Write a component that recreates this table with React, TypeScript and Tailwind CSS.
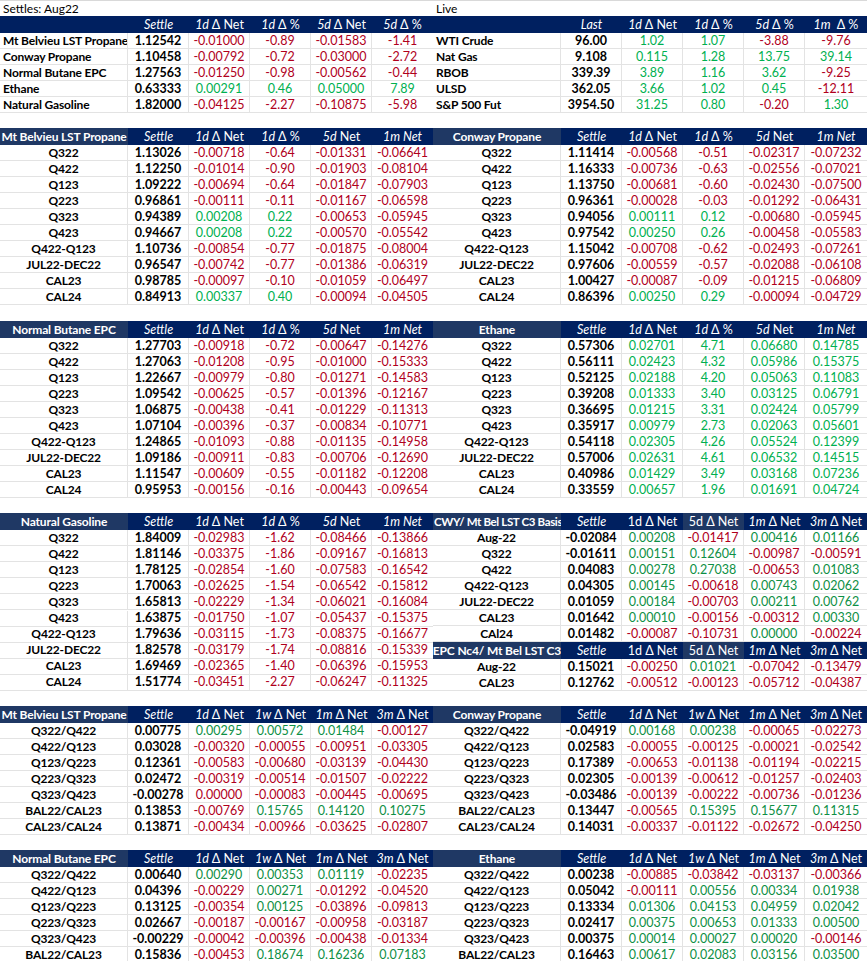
import React from "react";

type Head = [string, string?]; // [italic part, upright part]
type Row = string[];

const RED = "text-[#b0001c]";
const GREEN = "text-[#00b050]";
const GREEN_DK = "text-[#0e8f45]";

const NAVY = "bg-[#002060]";
const NAVY_LT = "bg-[#1f3864]";

const productHeads: Head[] = [["Settle"], ["1d", " Δ Net"], ["1d", " Δ %"], ["5d", " Net"], ["1m Net"]];
const spreadHeads: Head[] = [["Settle"], ["1d", " Δ Net"], ["1w", " Δ Net"], ["1m", " Δ Net"], ["3m", " Δ Net"]];
const basisHeads: Head[] = [["Settle"], ["", "1d Δ Net"], ["", "5d Δ Net"], ["1m", " Δ Net"], ["3m", " Δ Net"]];

function tone(v: string, dark: boolean) {
  if (v.startsWith("!")) return RED;
  if (v.startsWith("-")) return RED;
  return dark ? GREEN_DK : GREEN;
}

function HeadCell({ h, bg }: { h: Head; bg: string }) {
  return (
    <div className={`${bg} h-[17px] flex items-center justify-center whitespace-nowrap text-[12.5px] text-white`}>
      {h[0] && <span className="italic">{h[0]}</span>}
      {h[1] && <span className="whitespace-pre">{h[1]}</span>}
    </div>
  );
}

function Table({
  side,
  title,
  heads,
  rows,
  dark = false,
  leftLabels = false,
  lightCols = [],
  titleLeft = false,
}: {
  side: "l" | "r";
  title?: string;
  heads: Head[];
  rows: Row[];
  dark?: boolean;
  leftLabels?: boolean;
  lightCols?: number[];
  titleLeft?: boolean;
}) {
  const cols =
    side === "l"
      ? "w-[433px] grid-cols-[128px_repeat(5,61px)]"
      : "w-[434px] grid-cols-[128px_repeat(4,61px)_62px]";
  return (
    <div className={`grid ${cols}`}>
      <div
        className={`${title ? NAVY_LT : NAVY} h-[17px] flex items-center ${
          titleLeft ? "justify-start pl-[1px] text-[11.5px] tracking-[-0.35px]" : "justify-center text-[12px] tracking-[-0.15px]"
        } overflow-hidden whitespace-nowrap font-bold text-white`}
      >
        {title}
      </div>
      {heads.map((h, i) => (
        <HeadCell key={i} h={h} bg={lightCols.includes(i + 1) ? NAVY_LT : NAVY} />
      ))}
      {rows.map((r, ri) => (
        <React.Fragment key={ri}>
          <div
            className={`h-4 flex items-center ${
              leftLabels ? "justify-start pl-[3px]" : "justify-center"
            } whitespace-nowrap overflow-hidden border-r border-b border-[#e3e3e3] text-[12px] tracking-[-0.15px] font-bold text-black`}
          >
            {r[0]}
          </div>
          <div className="h-4 flex items-center justify-center border-r border-b border-[#e3e3e3] font-bold text-black">
            {r[1]}
          </div>
          {r.slice(2).map((v, vi) => (
            <div
              key={vi}
              className={`h-4 flex items-center justify-center border-b border-[#e3e3e3] ${
                vi < r.length - 3 ? "border-r" : ""
              } ${tone(v, dark)}`}
            >
              {v.replace("!", "")}
            </div>
          ))}
        </React.Fragment>
      ))}
    </div>
  );
}

function Pair({ children }: { children: React.ReactNode }) {
  return <div className="flex">{children}</div>;
}

export default function App() {
  return (
    <div className="w-[867px] h-[961px] overflow-hidden bg-white font-['Lato',sans-serif] text-[12.5px] leading-4">
      {/* top bar */}
      <div className="flex h-4 border-t border-[#d9d9d9]">
        <div className="w-[433px] pl-[3px] leading-[15px] text-[12px] text-black">Settles: Aug22</div>
        <div className="w-[434px] pl-[3px] leading-[15px] text-[12px] text-black">Live</div>
      </div>

      <Pair>
        <Table
          side="l"
          leftLabels
          heads={[["Settle"], ["1d", " Δ Net"], ["1d", " Δ %"], ["5d", " Δ Net"], ["5d", " Δ %"]]}
          rows={[
            ["Mt Belvieu LST Propane", "1.12542", "-0.01000", "-0.89", "-0.01583", "-1.41"],
            ["Conway Propane", "1.10458", "-0.00792", "-0.72", "-0.03000", "-2.72"],
            ["Normal Butane EPC", "1.27563", "-0.01250", "-0.98", "-0.00562", "-0.44"],
            ["Ethane", "0.63333", "0.00291", "0.46", "0.05000", "7.89"],
            ["Natural Gasoline", "1.82000", "-0.04125", "-2.27", "-0.10875", "-5.98"],
          ]}
        />
        <Table
          side="r"
          leftLabels
          heads={[["Last"], ["1d", " Δ Net"], ["1d", " Δ %"], ["5d", " Δ %"], ["1m", "  Δ %"]]}
          rows={[
            ["WTI Crude", "96.00", "1.02", "1.07", "-3.88", "-9.76"],
            ["Nat Gas", "9.108", "0.115", "1.28", "13.75", "39.14"],
            ["RBOB", "339.39", "3.89", "1.16", "3.62", "-9.25"],
            ["ULSD", "362.05", "3.66", "1.02", "0.45", "-12.11"],
            ["S&P 500 Fut", "3954.50", "31.25", "0.80", "-0.20", "1.30"],
          ]}
        />
      </Pair>

      <div className="h-[15px]" />
      <Pair>
        <Table
          side="l"
          title="Mt Belvieu LST Propane"
          heads={productHeads}
          rows={[
            ["Q322", "1.13026", "-0.00718", "-0.64", "-0.01331", "-0.06641"],
            ["Q422", "1.12250", "-0.01014", "-0.90", "-0.01903", "-0.08104"],
            ["Q123", "1.09222", "-0.00694", "-0.64", "-0.01847", "-0.07903"],
            ["Q223", "0.96861", "-0.00111", "-0.11", "-0.01167", "-0.06598"],
            ["Q323", "0.94389", "0.00208", "0.22", "-0.00653", "-0.05945"],
            ["Q423", "0.94667", "0.00208", "0.22", "-0.00570", "-0.05542"],
            ["Q422-Q123", "1.10736", "-0.00854", "-0.77", "-0.01875", "-0.08004"],
            ["JUL22-DEC22", "0.96547", "-0.00742", "-0.77", "-0.01386", "-0.06319"],
            ["CAL23", "0.98785", "-0.00097", "-0.10", "-0.01059", "-0.06497"],
            ["CAL24", "0.84913", "0.00337", "0.40", "-0.00094", "-0.04505"],
          ]}
        />
        <Table
          side="r"
          title="Conway Propane"
          heads={productHeads}
          rows={[
            ["Q322", "1.11414", "-0.00568", "-0.51", "-0.02317", "-0.07232"],
            ["Q422", "1.16333", "-0.00736", "-0.63", "-0.02556", "-0.07021"],
            ["Q123", "1.13750", "-0.00681", "-0.60", "-0.02430", "-0.07500"],
            ["Q223", "0.96361", "-0.00028", "-0.03", "-0.01292", "-0.06431"],
            ["Q323", "0.94056", "0.00111", "0.12", "-0.00680", "-0.05945"],
            ["Q423", "0.97542", "0.00250", "0.26", "-0.00458", "-0.05583"],
            ["Q422-Q123", "1.15042", "-0.00708", "-0.62", "-0.02493", "-0.07261"],
            ["JUL22-DEC22", "0.97606", "-0.00559", "-0.57", "-0.02088", "-0.06108"],
            ["CAL23", "1.00427", "-0.00087", "-0.09", "-0.01215", "-0.06809"],
            ["CAL24", "0.86396", "0.00250", "0.29", "-0.00094", "-0.04729"],
          ]}
        />
      </Pair>

      <div className="h-4" />
      <Pair>
        <Table
          side="l"
          title="Normal Butane EPC"
          heads={productHeads}
          rows={[
            ["Q322", "1.27703", "-0.00918", "-0.72", "-0.00647", "-0.14276"],
            ["Q422", "1.27063", "-0.01208", "-0.95", "-0.01000", "-0.15333"],
            ["Q123", "1.22667", "-0.00979", "-0.80", "-0.01271", "-0.14583"],
            ["Q223", "1.09542", "-0.00625", "-0.57", "-0.01396", "-0.12167"],
            ["Q323", "1.06875", "-0.00438", "-0.41", "-0.01229", "-0.11313"],
            ["Q423", "1.07104", "-0.00396", "-0.37", "-0.00834", "-0.10771"],
            ["Q422-Q123", "1.24865", "-0.01093", "-0.88", "-0.01135", "-0.14958"],
            ["JUL22-DEC22", "1.09186", "-0.00911", "-0.83", "-0.00706", "-0.12690"],
            ["CAL23", "1.11547", "-0.00609", "-0.55", "-0.01182", "-0.12208"],
            ["CAL24", "0.95953", "-0.00156", "-0.16", "-0.00443", "-0.09654"],
          ]}
        />
        <Table
          side="r"
          title="Ethane"
          heads={productHeads}
          rows={[
            ["Q322", "0.57306", "0.02701", "4.71", "0.06680", "0.14785"],
            ["Q422", "0.56111", "0.02423", "4.32", "0.05986", "0.15375"],
            ["Q123", "0.52125", "0.02188", "4.20", "0.05063", "0.11083"],
            ["Q223", "0.39208", "0.01333", "3.40", "0.03125", "0.06791"],
            ["Q323", "0.36695", "0.01215", "3.31", "0.02424", "0.05799"],
            ["Q423", "0.35917", "0.00979", "2.73", "0.02063", "0.05601"],
            ["Q422-Q123", "0.54118", "0.02305", "4.26", "0.05524", "0.12399"],
            ["JUL22-DEC22", "0.57006", "0.02631", "4.61", "0.06532", "0.14515"],
            ["CAL23", "0.40986", "0.01429", "3.49", "0.03168", "0.07236"],
            ["CAL24", "0.33559", "0.00657", "1.96", "0.01691", "0.04724"],
          ]}
        />
      </Pair>

      <div className="h-[15px]" />
      <Pair>
        <Table
          side="l"
          title="Natural Gasoline"
          heads={productHeads}
          rows={[
            ["Q322", "1.84009", "-0.02983", "-1.62", "-0.08466", "-0.13866"],
            ["Q422", "1.81146", "-0.03375", "-1.86", "-0.09167", "-0.16813"],
            ["Q123", "1.78125", "-0.02854", "-1.60", "-0.07583", "-0.16542"],
            ["Q223", "1.70063", "-0.02625", "-1.54", "-0.06542", "-0.15812"],
            ["Q323", "1.65813", "-0.02229", "-1.34", "-0.06021", "-0.16084"],
            ["Q423", "1.63875", "-0.01750", "-1.07", "-0.05437", "-0.15375"],
            ["Q422-Q123", "1.79636", "-0.03115", "-1.73", "-0.08375", "-0.16677"],
            ["JUL22-DEC22", "1.82578", "-0.03179", "-1.74", "-0.08816", "-0.15339"],
            ["CAL23", "1.69469", "-0.02365", "-1.40", "-0.06396", "-0.15953"],
            ["CAL24", "1.51774", "-0.03451", "-2.27", "-0.06247", "-0.11325"],
          ]}
        />
        <div className="flex flex-col">
          <Table
            side="r"
            dark
            titleLeft
            title="CWY/ Mt Bel LST C3 Basis"
            heads={basisHeads}
            lightCols={[3]}
            rows={[
              ["Aug-22", "-0.02084", "0.00208", "-0.01417", "0.00416", "0.01166"],
              ["Q322", "-0.01611", "0.00151", "0.12604", "-0.00987", "-0.00591"],
              ["Q422", "0.04083", "0.00278", "0.27038", "-0.00653", "0.01083"],
              ["Q422-Q123", "0.04305", "0.00145", "-0.00618", "0.00743", "0.02062"],
              ["JUL22-DEC22", "0.01059", "0.00184", "-0.00703", "0.00211", "0.00762"],
              ["CAL23", "0.01642", "0.00010", "-0.00156", "-0.00312", "0.00330"],
              ["CAl24", "0.01482", "-0.00087", "-0.10731", "0.00000", "-0.00224"],
            ]}
          />
          <Table
            side="r"
            dark
            title="EPC Nc4/ Mt Bel LST C3"
            heads={basisHeads}
            lightCols={[3]}
            rows={[
              ["Aug-22", "0.15021", "-0.00250", "0.01021", "-0.07042", "-0.13479"],
              ["CAL23", "0.12762", "-0.00512", "-0.00123", "-0.05712", "-0.04387"],
            ]}
          />
        </div>
      </Pair>

      <div className="h-[15px]" />
      <Pair>
        <Table
          side="l"
          dark
          title="Mt Belvieu LST Propane"
          heads={spreadHeads}
          rows={[
            ["Q322/Q422", "0.00775", "0.00295", "0.00572", "0.01484", "-0.00127"],
            ["Q422/Q123", "0.03028", "-0.00320", "-0.00055", "-0.00951", "-0.03305"],
            ["Q123/Q223", "0.12361", "-0.00583", "-0.00680", "-0.03139", "-0.04430"],
            ["Q223/Q323", "0.02472", "-0.00319", "-0.00514", "-0.01507", "-0.02222"],
            ["Q323/Q423", "-0.00278", "!0.00000", "-0.00083", "-0.00445", "-0.00695"],
            ["BAL22/CAL23", "0.13853", "-0.00769", "0.15765", "0.14120", "0.10275"],
            ["CAL23/CAL24", "0.13871", "-0.00434", "-0.00966", "-0.03625", "-0.02807"],
          ]}
        />
        <Table
          side="r"
          dark
          title="Conway Propane"
          heads={spreadHeads}
          rows={[
            ["Q322/Q422", "-0.04919", "0.00168", "0.00238", "-0.00065", "-0.02273"],
            ["Q422/Q123", "0.02583", "-0.00055", "-0.00125", "-0.00021", "-0.02542"],
            ["Q123/Q223", "0.17389", "-0.00653", "-0.01138", "-0.01194", "-0.02215"],
            ["Q223/Q323", "0.02305", "-0.00139", "-0.00612", "-0.01257", "-0.02403"],
            ["Q323/Q423", "-0.03486", "-0.00139", "-0.00222", "-0.00736", "-0.01236"],
            ["BAL22/CAL23", "0.13447", "-0.00565", "0.15395", "0.15677", "0.11315"],
            ["CAL23/CAL24", "0.14031", "-0.00337", "-0.01122", "-0.02672", "-0.04250"],
          ]}
        />
      </Pair>

      <div className="h-[15px]" />
      <Pair>
        <Table
          side="l"
          dark
          title="Normal Butane EPC"
          heads={spreadHeads}
          rows={[
            ["Q322/Q422", "0.00640", "0.00290", "0.00353", "0.01119", "-0.02235"],
            ["Q422/Q123", "0.04396", "-0.00229", "0.00271", "-0.01292", "-0.04520"],
            ["Q123/Q223", "0.13125", "-0.00354", "0.00125", "-0.03896", "-0.09813"],
            ["Q223/Q323", "0.02667", "-0.00187", "-0.00167", "-0.00958", "-0.03187"],
            ["Q323/Q423", "-0.00229", "-0.00042", "-0.00396", "-0.00438", "-0.01334"],
            ["BAL22/CAL23", "0.15836", "-0.00453", "0.18674", "0.16236", "0.07183"],
          ]}
        />
        <Table
          side="r"
          dark
          title="Ethane"
          heads={spreadHeads}
          rows={[
            ["Q322/Q422", "0.00238", "-0.00885", "-0.03842", "-0.03137", "-0.00366"],
            ["Q422/Q123", "0.05042", "-0.00111", "0.00556", "0.00334", "0.01938"],
            ["Q123/Q223", "0.13334", "0.01306", "0.04153", "0.04959", "0.02042"],
            ["Q223/Q323", "0.02417", "0.00375", "0.00653", "0.01333", "0.00500"],
            ["Q323/Q423", "0.00375", "0.00014", "0.00027", "0.00020", "-0.00146"],
            ["BAL22/CAL23", "0.16463", "0.00617", "0.02083", "0.03156", "0.03500"],
          ]}
        />
      </Pair>
    </div>
  );
}
